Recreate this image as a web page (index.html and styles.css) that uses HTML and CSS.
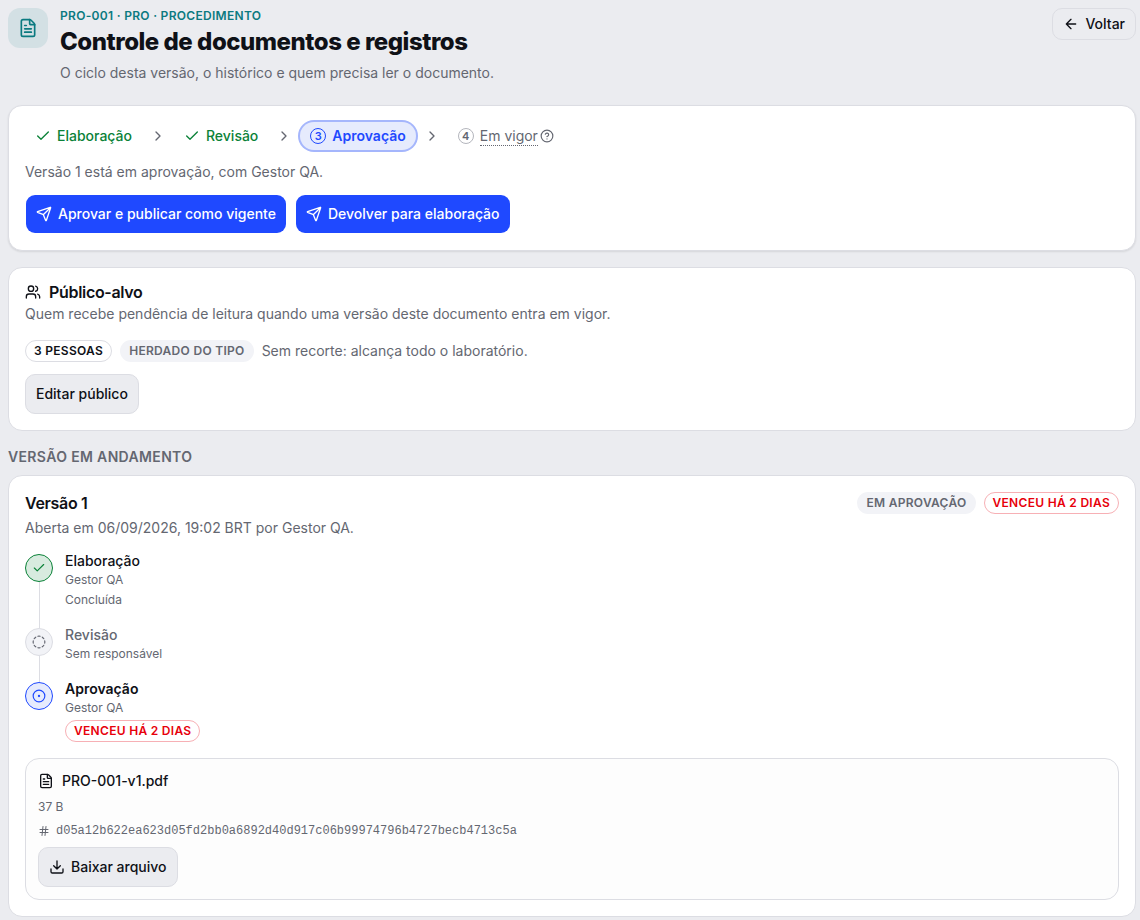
FILE: index.html
```html
<!DOCTYPE html>
<html lang="pt-BR">
<head>
    <meta charset="UTF-8">
    <meta name="viewport" content="width=device-width, initial-scale=1.0">
    <title>Controle de documentos e registros</title>
    <link rel="stylesheet" href="styles.css">
</head>
<body>
    <!-- Shared icons -->
    <svg class="sprite" aria-hidden="true">
        <symbol id="file-text" viewBox="0 0 24 24">
            <path d="M6 22a2 2 0 0 1-2-2V4a2 2 0 0 1 2-2h8a2.4 2.4 0 0 1 1.704.706l3.588 3.588A2.4 2.4 0 0 1 20 8v12a2 2 0 0 1-2 2z"/>
            <path d="M14 2v5a1 1 0 0 0 1 1h5M10 9H8M16 13H8M16 17H8"/>
        </symbol>
        <symbol id="arrow-left" viewBox="0 0 24 24"><path d="m12 19-7-7 7-7M19 12H5"/></symbol>
        <symbol id="check" viewBox="0 0 24 24"><path d="M20 6 9 17l-5-5"/></symbol>
        <symbol id="chevron" viewBox="0 0 24 24"><path d="m9 18 6-6-6-6"/></symbol>
        <symbol id="help" viewBox="0 0 24 24">
            <circle cx="12" cy="12" r="10"/>
            <path d="M9.09 9a3 3 0 0 1 5.83 1c0 2-3 3-3 3M12 17h.01"/>
        </symbol>
        <symbol id="send" viewBox="0 0 24 24">
            <path d="M14.536 21.686a.5.5 0 0 0 .937-.024l6.5-19a.496.496 0 0 0-.635-.635l-19 6.5a.5.5 0 0 0-.024.937l7.93 3.18a2 2 0 0 1 1.112 1.11zM21.854 2.147l-10.94 10.939"/>
        </symbol>
        <symbol id="users" viewBox="0 0 24 24">
            <path d="M16 21v-2a4 4 0 0 0-4-4H6a4 4 0 0 0-4 4v2"/>
            <circle cx="9" cy="7" r="4"/>
            <path d="M16 3.128a4 4 0 0 1 0 7.744M22 21v-2a4 4 0 0 0-3-3.87"/>
        </symbol>
        <symbol id="circle-dashed" viewBox="0 0 24 24">
            <path d="M10.1 2.182a10 10 0 0 1 3.8 0M13.9 21.818a10 10 0 0 1-3.8 0M17.609 3.721a10 10 0 0 1 2.69 2.7M2.182 13.9a10 10 0 0 1 0-3.8M20.279 17.609a10 10 0 0 1-2.7 2.69M21.818 10.1a10 10 0 0 1 0 3.8M3.721 6.391a10 10 0 0 1 2.7-2.69M6.391 20.279a10 10 0 0 1-2.69-2.7"/>
        </symbol>
        <symbol id="circle-dot" viewBox="0 0 24 24"><circle cx="12" cy="12" r="10"/><circle cx="12" cy="12" r="1"/></symbol>
        <symbol id="hash" viewBox="0 0 24 24"><path d="M4 9h16M4 15h16M10 3 8 21M16 3l-2 18"/></symbol>
        <symbol id="download" viewBox="0 0 24 24"><path d="M12 15V3M21 15v4a2 2 0 0 1-2 2H5a2 2 0 0 1-2-2v-4M7 10l5 5 5-5"/></symbol>
    </svg>

    <header class="page-header">
        <span class="page-icon"><svg class="icon icon-lg"><use href="#file-text"/></svg></span>
        <div class="page-heading">
            <p class="eyebrow">PRO-001 · PRO · PROCEDIMENTO</p>
            <h1>Controle de documentos e registros</h1>
            <p class="subtitle">O ciclo desta versão, o histórico e quem precisa ler o documento.</p>
        </div>
        <a class="btn btn-back" href="#"><svg class="icon"><use href="#arrow-left"/></svg>Voltar</a>
    </header>

    <main>
        <section class="card card-raised">
            <ol class="steps">
                <li class="step done"><svg class="icon"><use href="#check"/></svg>Elaboração</li>
                <li class="sep" aria-hidden="true"><svg class="icon"><use href="#chevron"/></svg></li>
                <li class="step done"><svg class="icon"><use href="#check"/></svg>Revisão</li>
                <li class="sep" aria-hidden="true"><svg class="icon"><use href="#chevron"/></svg></li>
                <li class="step current" aria-current="step"><span class="step-number">3</span>Aprovação</li>
                <li class="sep" aria-hidden="true"><svg class="icon"><use href="#chevron"/></svg></li>
                <li class="step"><span class="step-number">4</span><span class="term"><span class="term-text">Em vigor</span><svg class="icon icon-sm"><use href="#help"/></svg></span></li>
            </ol>
            <p class="muted state">Versão 1 está em aprovação, com Gestor QA.</p>
            <div class="actions">
                <button class="btn btn-primary" type="button"><svg class="icon"><use href="#send"/></svg>Aprovar e publicar como vigente</button>
                <button class="btn btn-primary" type="button"><svg class="icon"><use href="#send"/></svg>Devolver para elaboração</button>
            </div>
        </section>

        <section class="card">
            <h2 class="card-title"><svg class="icon"><use href="#users"/></svg>Público-alvo</h2>
            <p class="muted card-desc">Quem recebe pendência de leitura quando uma versão deste documento entra em vigor.</p>
            <div class="audience">
                <span class="badge badge-outline">3 PESSOAS</span>
                <span class="badge">HERDADO DO TIPO</span>
                <span class="muted">Sem recorte: alcança todo o laboratório.</span>
            </div>
            <button class="btn" type="button">Editar público</button>
        </section>

        <h2 class="section-title">VERSÃO EM ANDAMENTO</h2>
        <section class="card">
            <div class="version-head">
                <h3 class="card-title">Versão 1</h3>
                <div class="badges">
                    <span class="badge">EM APROVAÇÃO</span>
                    <span class="badge badge-danger">VENCEU HÁ 2 DIAS</span>
                </div>
            </div>
            <p class="muted card-desc">Aberta em 06/09/2026, 19:02 BRT por Gestor QA.</p>

            <ol class="timeline">
                <li class="event event-done">
                    <span class="marker"><svg class="icon icon-sm"><use href="#check"/></svg></span>
                    <div class="event-body">
                        <p class="event-name">Elaboração</p>
                        <p class="small">Gestor QA</p>
                        <p class="small">Concluída</p>
                    </div>
                </li>
                <li class="event event-empty">
                    <span class="marker"><svg class="icon icon-sm"><use href="#circle-dashed"/></svg></span>
                    <div class="event-body">
                        <p class="event-name">Revisão</p>
                        <p class="small">Sem responsável</p>
                    </div>
                </li>
                <li class="event event-current">
                    <span class="marker"><svg class="icon icon-sm"><use href="#circle-dot"/></svg></span>
                    <div class="event-body">
                        <p class="event-name">Aprovação</p>
                        <p class="small">Gestor QA</p>
                        <span class="badge badge-danger">VENCEU HÁ 2 DIAS</span>
                    </div>
                </li>
            </ol>

            <div class="file">
                <p class="file-name"><svg class="icon"><use href="#file-text"/></svg>PRO-001-v1.pdf</p>
                <p class="small">37 B</p>
                <p class="small file-hash"><svg class="icon icon-xs"><use href="#hash"/></svg><code>d05a12b622ea623d05fd2bb0a6892d40d917c06b99974796b4727becb4713c5a</code></p>
                <button class="btn" type="button"><svg class="icon"><use href="#download"/></svg>Baixar arquivo</button>
            </div>
        </section>
    </main>
</body>
</html>
```

FILE: styles.css
```css
* {
    box-sizing: border-box;
}

body {
    margin: 0;
    padding: 8px 4px 3px 8px;
    background: #ebecf0;
    color: #0f1117;
    font-family: Inter, "Liberation Sans", sans-serif;
    font-size: 14px;
    line-height: 20px;
}

h1, h2, h3, p, ol {
    margin: 0;
    padding: 0;
}

ol {
    list-style: none;
}

.sprite {
    display: none;
}

.icon {
    width: 16px;
    height: 16px;
    flex-shrink: 0;
    fill: none;
    stroke: currentColor;
    stroke-width: 2;
    stroke-linecap: round;
    stroke-linejoin: round;
}

.icon-lg {
    width: 20px;
    height: 20px;
}

.icon-sm {
    width: 14px;
    height: 14px;
}

.icon-xs {
    width: 12px;
    height: 12px;
}

.muted {
    color: #646771;
}

.small {
    color: #646771;
    font-size: 12px;
    line-height: 16px;
}

/* Header */
.page-header {
    display: flex;
    align-items: flex-start;
    gap: 12px;
    margin-bottom: 22px;
}

.page-icon {
    display: flex;
    align-items: center;
    justify-content: center;
    width: 40px;
    height: 40px;
    border-radius: 12px;
    background: #d3e0e4;
    color: #0b7a80;
}

.page-heading {
    flex: 1;
}

.eyebrow {
    color: #0b7a80;
    font-size: 12px;
    font-weight: 600;
    line-height: 16px;
    letter-spacing: 0.025em;
}

h1 {
    margin-top: 3px;
    font-size: 24px;
    font-weight: 800;
    line-height: 30px;
    letter-spacing: -0.02em;
}

.subtitle {
    margin-top: 6px;
    color: #646771;
}

/* Buttons */
.btn {
    display: inline-flex;
    align-items: center;
    gap: 6px;
    height: 40px;
    padding: 0 10px;
    border: 1px solid #dcdde3;
    border-radius: 10px;
    background: #ebecf0;
    color: #0f1117;
    font: inherit;
    font-weight: 500;
    text-decoration: none;
    cursor: pointer;
}

.btn-back {
    height: 32px;
}

.btn-primary {
    border-color: transparent;
    background: #1f49ff;
    background-clip: padding-box;
    color: #fff;
}

/* Cards */
.card {
    margin-bottom: 16px;
    padding: 16px;
    border: 1px solid #dcdde3;
    border-radius: 14px;
    background: #fff;
}

.card:last-child {
    margin-bottom: 0;
}

.card-raised {
    box-shadow: 0 1px 2px rgba(15, 17, 23, 0.1);
}

.card-title {
    display: flex;
    align-items: center;
    gap: 8px;
    font-size: 16px;
    font-weight: 600;
    line-height: 16px;
    letter-spacing: -0.02em;
}

.card-desc {
    margin-top: 4px;
}

.section-title {
    margin-bottom: 8px;
    color: #646771;
    font-size: 14px;
    font-weight: 600;
    line-height: 20px;
    letter-spacing: 0.025em;
}

/* Steps */
.steps {
    display: flex;
    flex-wrap: wrap;
    align-items: center;
    gap: 8px;
}

.step {
    display: flex;
    align-items: center;
    gap: 6px;
    height: 28px;
    padding: 0 10px;
    border-radius: 14px;
    color: #646771;
}

.step.done {
    color: #0b8238;
    font-weight: 500;
}

.step.current {
    background: #e6ebfd;
    box-shadow: 0 0 0 2px #a5b6fc;
    color: #1f49ff;
    font-weight: 600;
}

.step-number {
    display: flex;
    align-items: center;
    justify-content: center;
    width: 16px;
    height: 16px;
    border: 1px solid #b4b6bd;
    border-radius: 50%;
    font-size: 11px;
    font-weight: 600;
    line-height: 14px;
}

.current .step-number {
    border-color: currentColor;
}

.sep {
    display: flex;
    color: #646771;
}

.term {
    display: flex;
    align-items: center;
    gap: 2px;
}

.term-text {
    border-bottom: 1px dotted #646771;
    line-height: 18px;
}

.state {
    margin: 12px 0;
}

.actions,
.audience,
.badges {
    display: flex;
    flex-wrap: wrap;
    align-items: center;
    gap: 8px;
}

.audience {
    margin: 16px 0 12px;
}

/* Badges */
.badge {
    display: inline-flex;
    align-items: center;
    height: 22px;
    padding: 0 8px;
    border: 1px solid transparent;
    border-radius: 11px;
    background: #f2f3f7;
    color: #646771;
    font-size: 12px;
    font-weight: 600;
    line-height: 16px;
    letter-spacing: 0.025em;
}

.badge-outline {
    border-color: #dcdde3;
    background: #fff;
    color: #0f1117;
}

.badge-danger {
    border-color: #f7b0b5;
    background: #fff;
    color: #e7000b;
}

/* Version */
.version-head {
    display: flex;
    align-items: center;
    justify-content: space-between;
}

.timeline {
    margin: 16px 0;
}

.event {
    display: flex;
    gap: 12px;
    position: relative;
    padding-bottom: 20px;
}

.event:last-child {
    padding-bottom: 0;
}

/* line between two markers */
.event:not(:last-child)::before {
    content: "";
    position: absolute;
    top: 28px;
    bottom: 0;
    left: 14px;
    width: 1px;
    background: #dcdde3;
}

.marker {
    display: flex;
    align-items: center;
    justify-content: center;
    flex-shrink: 0;
    width: 28px;
    height: 28px;
    border: 1px solid #dcdde3;
    border-radius: 50%;
    background: #f2f3f7;
    color: #646771;
}

.event-done .marker {
    border-color: #0b8238;
    background: #d8ebdf;
    color: #0b8238;
}

.event-current .marker {
    border-color: #1f49ff;
    background: #e6ebfd;
    color: #1f49ff;
}

.event-body {
    display: flex;
    flex-direction: column;
    align-items: flex-start;
    gap: 4px;
}

.event-name {
    font-weight: 500;
    line-height: 14px;
}

.event-empty .event-name {
    color: #646771;
}

.event-current .event-name {
    font-weight: 600;
}

/* File */
.file {
    display: flex;
    flex-direction: column;
    align-items: flex-start;
    gap: 8px;
    padding: 12px;
    border: 1px solid #dcdde3;
    border-radius: 14px;
    background: #fdfdfd;
}

.file-name {
    display: flex;
    align-items: center;
    gap: 8px;
    font-weight: 500;
}

.file-hash {
    display: flex;
    align-items: center;
    gap: 6px;
}

.file-hash code {
    font-family: "Liberation Mono", monospace;
    font-size: 12px;
    overflow-wrap: anywhere;
}
```
